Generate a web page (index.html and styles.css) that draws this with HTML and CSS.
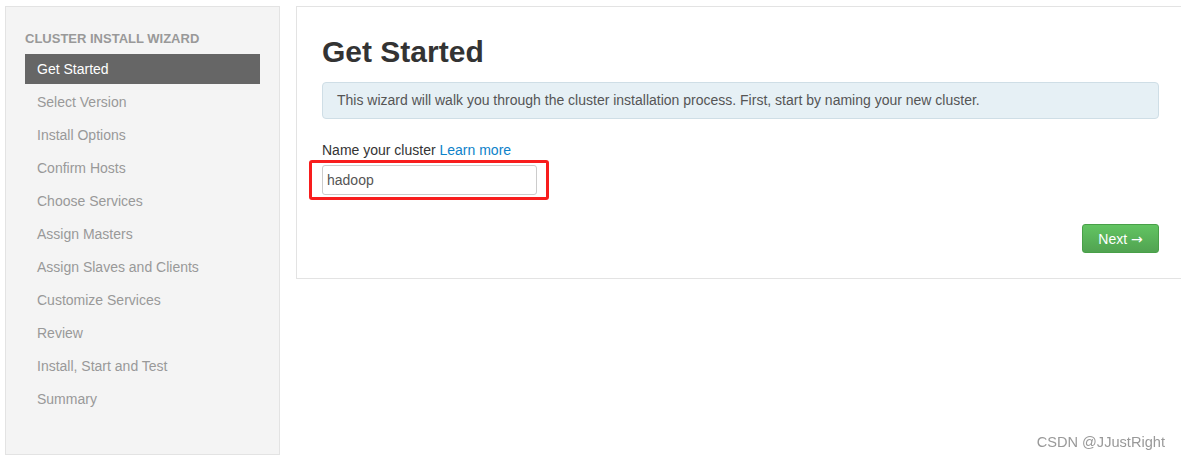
FILE: index.html
```html
<!DOCTYPE html>
<html lang="en">
<head>
  <meta charset="UTF-8" />
  <title>Cluster Install Wizard</title>
  <link rel="stylesheet" href="styles.css">
</head>
<body>
  <div class="wizard">
    <div class="sidebar">
      <div class="nav-header">Cluster Install Wizard</div>
      <ul class="steps">
        <li class="active">Get Started</li>
        <li>Select Version</li>
        <li>Install Options</li>
        <li>Confirm Hosts</li>
        <li>Choose Services</li>
        <li>Assign Masters</li>
        <li>Assign Slaves and Clients</li>
        <li>Customize Services</li>
        <li>Review</li>
        <li>Install, Start and Test</li>
        <li>Summary</li>
      </ul>
    </div>

    <div class="content">
      <h1>Get Started</h1>
      <div class="alert">This wizard will walk you through the cluster installation process. First, start by naming your new cluster.</div>

      <label class="field-label">Name your cluster <a href="#">Learn more</a></label>
      <div class="highlight">
        <input type="text" value="hadoop" />
      </div>

      <div class="actions">
        <button class="btn-next">Next <span class="arrow">&rarr;</span></button>
      </div>
    </div>
  </div>

  <div class="watermark">CSDN @JJustRight</div>
</body>
</html>
```

FILE: styles.css
```css
body {
  margin: 0;
  font-family: "Liberation Sans", Arial, sans-serif;
  font-size: 14px;
  color: #333;
  background: #fff;
}
.wizard {
  display: flex;
  align-items: flex-start;
  gap: 16px;
  padding: 6px 0 0 5px;
}
.sidebar {
  width: 235px;
  padding: 22px 19px 37px 19px;
  background-color: #f4f4f4;
  border: 1px solid #e3e3e3;
}
.nav-header {
  font-size: 13px;
  font-weight: bold;
  text-transform: uppercase;
  color: #999;
  line-height: 20px;
  margin-bottom: 5px;
}
.steps {
  list-style: none;
  margin: 0;
  padding: 0;
}
.steps li {
  height: 30px;
  line-height: 30px;
  padding-left: 12px;
  margin-bottom: 3px;
  color: #999;
}
.steps li.active {
  background-color: #666;
  color: #fff;
}
.content {
  flex: 1;
  padding: 26px 22px 25px 25px;
  border: 1px solid #e3e3e3;
  border-right: none;
}
h1 {
  font-size: 30px;
  line-height: 38px;
  margin: 0 0 11px 0;
  color: #333;
}
.alert {
  background-color: #e6f0f5;
  border: 1px solid #cfdee6;
  border-radius: 4px;
  padding: 8px 14px;
  line-height: 19px;
  color: #555;
}
.field-label {
  display: block;
  margin-top: 21px;
  line-height: 20px;
  color: #333;
}
.field-label a {
  color: #0d82c9;
  text-decoration: none;
}
.highlight {
  display: inline-block;
  margin-left: -13px;
  padding: 2px 9px 2px 10px;
  border: 3px solid #f81d1d;
  border-radius: 3px;
}
.highlight input {
  display: block;
  box-sizing: border-box;
  width: 215px;
  height: 30px;
  padding: 0 4px;
  border: 1px solid #ccc;
  border-radius: 3px;
  font-family: inherit;
  font-size: 14px;
  color: #555;
  outline: none;
}
.actions {
  display: flex;
  justify-content: flex-end;
  margin-top: 24px;
}
.btn-next {
  width: 77px;
  height: 29px;
  border: 1px solid #48a048;
  border-radius: 3px;
  background: linear-gradient(#62c462, #51a351);
  color: #fff;
  font-family: inherit;
  font-size: 14px;
  padding: 0;
}
.btn-next .arrow {
  font-family: "DejaVu Sans", sans-serif;
  font-size: 14px;
}
.watermark {
  position: fixed;
  right: 16px;
  bottom: 10px;
  font-size: 14.6px;
  color: #999;
}
```
